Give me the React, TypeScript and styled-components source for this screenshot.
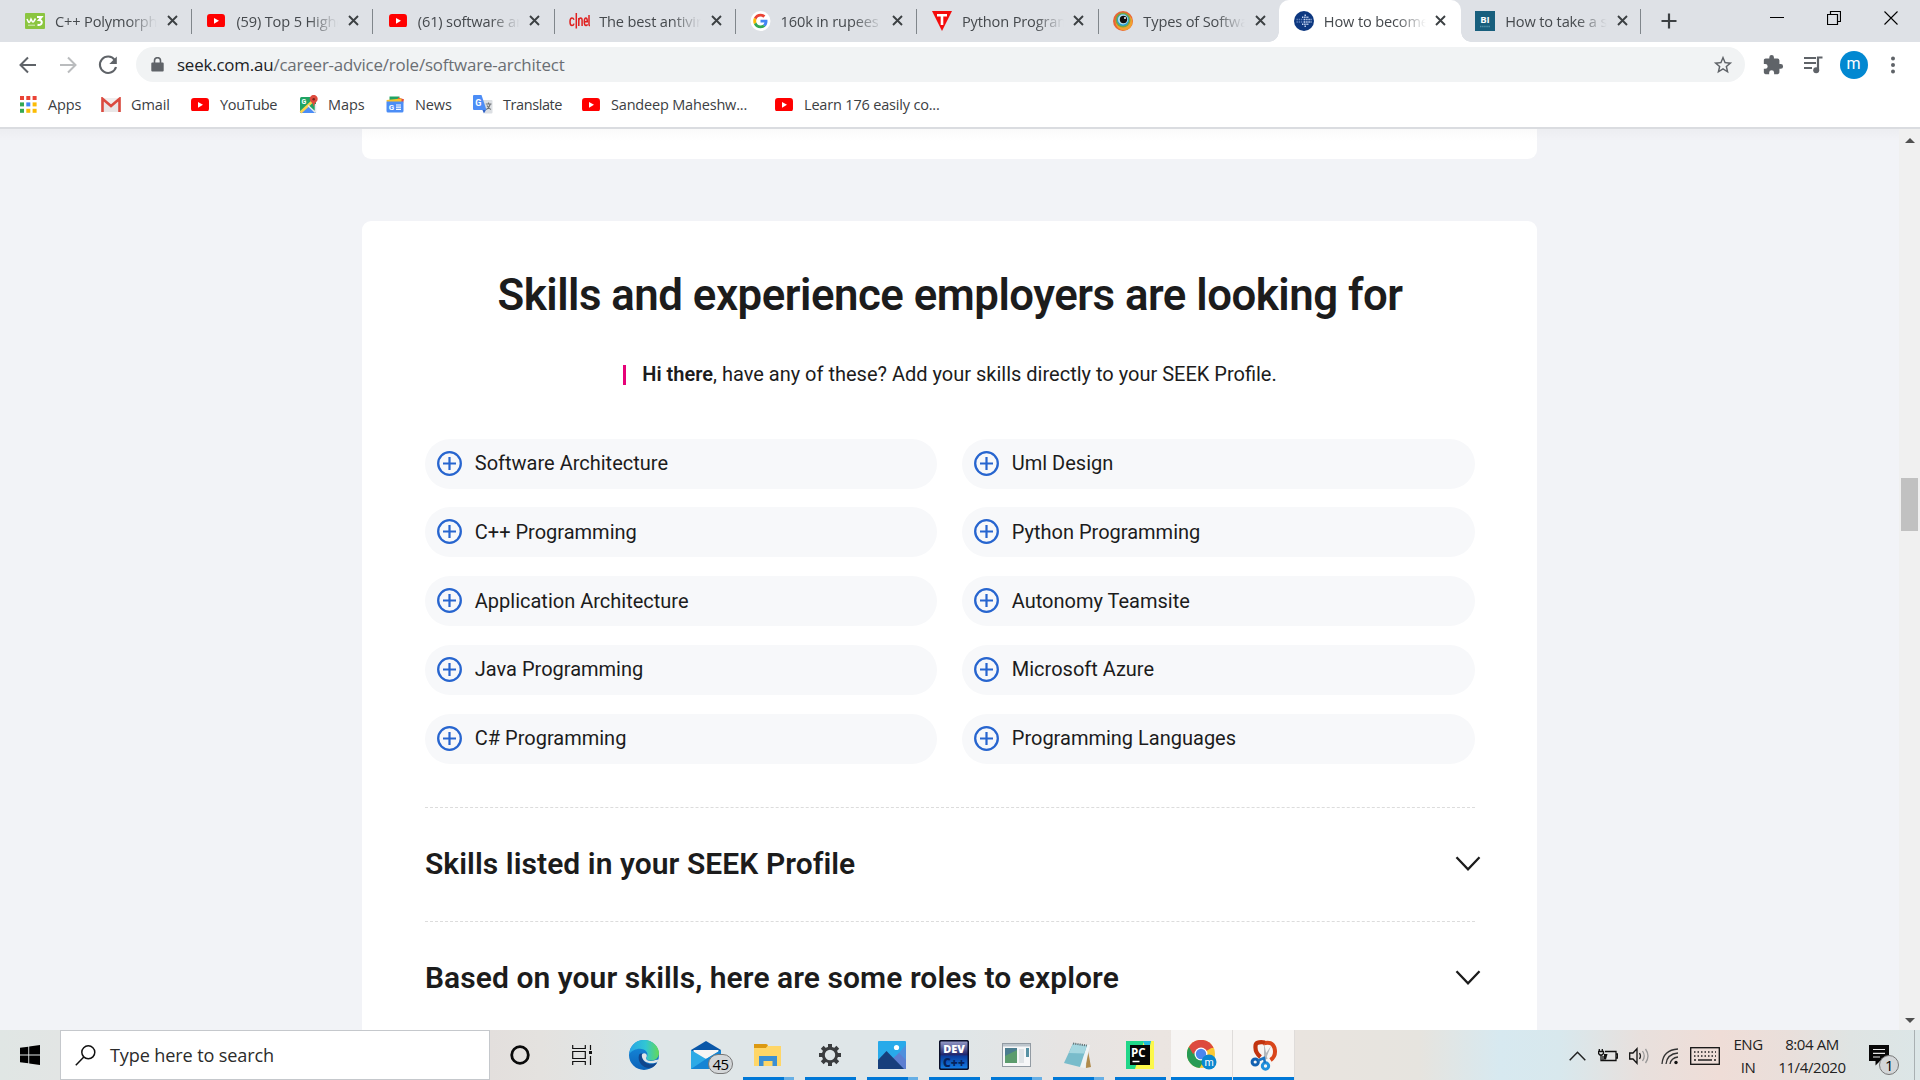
import React from 'react';
import styled, { createGlobalStyle, css } from 'styled-components';

const ui = '"Open Sans", "Noto Sans", sans-serif';

const Global = createGlobalStyle`
  * { box-sizing: border-box; }
  html, body { margin: 0; padding: 0; overflow: hidden; }
  svg { display: block; flex: none; }
`;

const Screen = styled.div`
  width: 1920px; height: 1080px; display: flex; flex-direction: column;
  overflow: hidden; background: #fff; font-family: ${ui};
`;

/* ---------- tab strip ---------- */
const TabStrip = styled.div`
  display: flex; height: 42px; background: #dee1e6; padding-left: 10.5px; flex: none;
`;
const Tab = styled.div<{ $active?: boolean; $line?: boolean; $w?: number }>`
  position: relative; display: flex; align-items: center; width: ${p => p.$w ?? 181.4}px; height: 42px; flex: none;
  padding: 0 13px 1px 14px;
  ${p => p.$line && css`
    &::after { content: ''; position: absolute; right: 0; top: 9px; width: 1px; height: 25px; background: #80868b; }
  `}
  ${p => p.$active && css`
    background: #fff; border-radius: 10px 10px 0 0;
    &::before, &::after { content: ''; position: absolute; bottom: 0; width: 10px; height: 10px; }
    &::before { left: -10px; background: radial-gradient(circle at 0 0, transparent 9.5px, #fff 10px); }
    &::after { right: -10px; background: radial-gradient(circle at 100% 0, transparent 9.5px, #fff 10px); }
  `}
`;
const Favicon = styled.div`
  width: 21px; height: 21px; display: flex; align-items: center; justify-content: center; flex: none;
`;
const TabTitle = styled.div`
  width: 103px; margin-left: 9.5px; overflow: hidden; white-space: pre; font-size: 14.6px; line-height: 22px;
  letter-spacing: -0.15px; color: #45494d;
  mask-image: linear-gradient(90deg, #000 72px, transparent 102px);
`;
const Close = styled.div`margin-left: 8.5px;`;
const NewTab = styled.div`display: flex; align-items: center; margin-left: 20px; padding-bottom: 0;`;
const WindowButtons = styled.div`
  display: flex; margin-left: auto; align-items: center; height: 36px; gap: 43px; padding-right: 22px;
`;

/* ---------- toolbar ---------- */
const Toolbar = styled.div`
  display: flex; align-items: center; height: 45px; padding: 0 14px 0 16px; flex: none; background: #fff;
`;
const NavIcons = styled.div`display: flex; gap: 16px; width: 119.5px;`;
const Omnibox = styled.div`
  display: flex; align-items: center; width: 1609px; height: 35px; border-radius: 18px; background: #f1f3f4; padding: 0 11px 0 15px;
`;
const Url = styled.div`
  flex: 1; margin-left: 13.5px; font-size: 16.9px; letter-spacing: -0.18px; line-height: 24px; color: #6a6e73; white-space: pre;
  b { font-weight: 400; color: #202124; }
`;
const Actions = styled.div`display: flex; align-items: center; margin-left: 17px; gap: 15.5px; svg:first-child { margin-right: 3px; }`;
const Avatar = styled.div`
  width: 28px; height: 28px; border-radius: 50%; background: #0288d1; color: #fff; font-family: Roboto, sans-serif;
  font-size: 16px; line-height: 26px; text-align: center;
`;
const Bookmarks = styled.div`
  display: flex; align-items: center; height: 40px; padding: 0 0 5px 19px; flex: none; background: #fff;
`;
const Bookmark = styled.div<{ $w: number; $gap: number; $ls?: number }>`
  display: flex; align-items: center; width: ${p => p.$w}px; gap: ${p => p.$gap}px; white-space: pre; flex: none;
  font-size: 14.5px; line-height: 20px; letter-spacing: ${p => p.$ls ?? -0.1}px; color: #3c4043;
`;

/* ---------- page ---------- */
const Viewport = styled.div`
  display: flex; height: 903px; flex: none; border-top: 2px solid #dadce0; background: #f2f3f7; overflow: hidden;
`;
const Page = styled.main`
  width: 1899px; padding-left: 362px; font-family: Roboto, sans-serif; color: #1c1c1c;
  background: linear-gradient(rgba(0,0,0,.025), transparent 12px);
`;
const PrevCard = styled.section`
  width: 1175px; height: 30px; background: linear-gradient(#fafafa, #fff 12px); border-radius: 0 0 9px 9px;
`;
const Card = styled.section`
  width: 1175px; height: 900px; margin-top: 62px; background: #fff; border-radius: 9px 9px 0 0; padding: 47px 62px 0 63px;
`;
const Title = styled.h1`
  margin: 0; font-size: 43.75px; line-height: 54px; font-weight: 600; text-align: center; white-space: pre; letter-spacing: -0.48px;
`;
const Greeting = styled.p`
  display: flex; align-items: center; justify-content: center; margin: 40px 0 0; font-size: 20px; line-height: 25px; height: 25px;
  white-space: pre;
  b { font-weight: 600; }
`;
const Accent = styled.span`width: 3px; height: 20px; background: #e60278; margin-right: 16px;`;
const SkillGrid = styled.div`
  display: grid; grid-template-columns: 512px 513px; column-gap: 25px; row-gap: 18.75px; margin-top: 51.6px;
`;
const Skill = styled.button`
  display: flex; align-items: center; height: 50px; border: 0; border-radius: 25px; background: #f7f8fa; padding: 0 0 1px 12.4px; gap: 12.4px;
  font: 400 20px/28px Roboto, sans-serif; color: #1c1c1c;
`;
const Accordion = styled.div`
  display: flex; align-items: center; justify-content: space-between; height: 113px; width: 1055.5px; padding-bottom: 1px;
`;
const Rule = styled.div`width: 1050px; border-top: 1px dashed #dcdcdc;`;
const Accordions = styled.div`margin-top: 43.4px;`;
const AccordionTitle = styled.h2`
  margin: 0; font-size: 30px; line-height: 38px; font-weight: 600; white-space: pre; letter-spacing: 0.06px;
`;
const Scrollbar = styled.div`
  width: 21px; background: #f0f0f0; display: flex; flex-direction: column; align-items: center; padding: 9px 0 7px;
`;
const Thumb = styled.div`width: 17px; height: 53px; margin-top: 335px; background: #c1c1c1;`;
const Arrow = styled.div<{ $down?: boolean }>`
  border: 5px solid transparent; border-width: ${p => (p.$down ? '5px 5px 0' : '0 5px 5px')};
  border-${p => (p.$down ? 'top' : 'bottom')}-color: #505050; margin-top: ${p => (p.$down ? 'auto' : '0')};
`;

/* ---------- taskbar ---------- */
const Taskbar = styled.footer`
  display: flex; height: 50px; flex: none;
  background: linear-gradient(90deg, #e0e6e4 0, #e2e5e4 60px, #e3dfdd 490px, #e4e2df 540px, #dfe6e8 640px, #dfe6e8 950px, #e6e4e3 1060px, #ebe5e1 1160px, #e9e4df 1300px, #e6e4df 1420px, #d7e9f0 1500px, #d8e8ed 1560px, #e8e0dd 1640px, #efddd7 1720px, #e9dfdb 1790px, #dfe4e3 1850px, #dce6e7 1920px);
`;
const Start = styled.div`width: 60px; display: flex; align-items: center; justify-content: center;`;
const Search = styled.div`
  display: flex; align-items: center; width: 430px; margin-right: -1px; height: 50px; background: #fff; border: 1px solid #c5c8cc; padding-left: 14px; gap: 14px;
  font-size: 18.1px; letter-spacing: -0.13px; color: #2b2b2b; white-space: pre; flex: none;
`;
const Slot = styled.div<{ $active?: boolean }>`
  position: relative; width: 62px; display: flex; align-items: center; justify-content: center; flex: none;
  background: ${p => (p.$active ? 'rgba(255,255,255,.62)' : 'none')};
  border-right: ${p => (p.$active ? '1px solid #dfdcda' : '0')};
`;
const Underline = styled.div<{ $kind: 'one' | 'many' | 'full' }>`
  position: absolute; bottom: 0; height: 3px; left: ${p => (p.$kind === 'full' ? 0 : 6)}px; right: ${p => (p.$kind === 'full' ? 0 : 5)}px;
  background: ${p => (p.$kind === 'many' ? 'linear-gradient(90deg, #0078d7 41px, #67afe5 41px)' : '#0078d7')};
`;
const Badge = styled.span<{ $x: number; $y: number; $w: number }>`
  position: absolute; left: ${p => p.$x}px; top: ${p => p.$y}px; width: ${p => p.$w}px; height: 20px; border-radius: 10px;
  background: #d3d6d8; border: 1px solid #777; font-size: 15px; line-height: 18px; text-align: center; color: #000; letter-spacing: -0.6px;
`;
const Tray = styled.div`display: flex; align-items: center; margin-left: auto; height: 50px; color: #222;`;
const TrayIcons = styled.div`display: flex; align-items: center; gap: 11.4px; padding-top: 2px;`;
const TrayText = styled.div<{ $w: number; $ls: number; $ml: number }>`
  width: ${p => p.$w}px; margin-left: ${p => p.$ml}px; text-align: center; font-size: 15px; line-height: 22.5px; letter-spacing: ${p => p.$ls}px; white-space: pre;
  padding-top: 1px;
`;
const Notice = styled.div`position: relative; width: 32px; height: 50px; margin-left: 17px; padding-top: 15px;`;
const ShowDesktop = styled.div`width: 6px; height: 50px; border-left: 1px solid #a9b0b2; margin-left: 13px;`;

/* ---------- icons ---------- */
const CloseX = () => (
  <svg width="11" height="11" viewBox="0 0 11 11"><path d="M1 1l9 9M10 1l-9 9" stroke="#3c4043" strokeWidth="1.900" /></svg>
);
const YouTube = ({ w = 18 }: { w?: number }) => (
  <svg width={w} height={w * 0.76} viewBox="0 0 18 13.7"><rect width="18" height="13.7" rx="3" fill="#f00" /><path d="M7 4l5 2.85L7 9.7z" fill="#fff" /></svg>
);
const W3 = () => (
  <svg width="20" height="16" viewBox="0 0 20 16"><rect width="20" height="16" rx="1" fill="#8bc540" />
    <path d="M2 6l1.500 3q.8 1 1.500-.5L6 6l1.300 2.600q.7 1 1.400 0L10.500 5.500" fill="none" stroke="#fff" strokeWidth="1.500" />
    <path d="M12 4h4.500l-2.500 3q3 0 2.800 2.600-.6 3-4.300 2.200" fill="none" stroke="#fff" strokeWidth="2" /><path d="M3 12.200h7" stroke="#d9edbe" /></svg>
);
const Cnet = () => (
  <svg width="21" height="16" viewBox="0 0 21 16"><g fill="none" stroke="#e0201f" strokeWidth="1.500">
    <path d="M5 6.800Q4.300 5 3 5 1 5 1 8.800t2 3.800q1.500 0 2-2M7.300 0v15.500M9.800 13V5M9.800 7.500Q10.200 5 11.600 5q1.500 0 1.500 2.500V13M15.300 8.700h3q0-3.700-1.500-3.700t-1.500 3.800q0 3.800 1.700 3.800 1 0 1.400-1.400M20 2v9q0 1.700 1 1.500" /></g></svg>
);
const GoogleG = () => (
  <svg width="21" height="20" viewBox="0 0 48 48"><circle cx="24" cy="24" r="24" fill="#fff" /><g transform="translate(6.500 6.500) scale(.73)">
    <path fill="#EA4335" d="M24 9.500c3.540 0 6.710 1.220 9.210 3.600l6.850-6.850C35.900 2.380 30.470 0 24 0 14.620 0 6.510 5.380 2.560 13.220l7.980 6.190C12.430 13.720 17.740 9.500 24 9.500z" />
    <path fill="#4285F4" d="M46.980 24.550c0-1.570-.15-3.090-.38-4.550H24v9.020h12.940c-.58 2.960-2.260 5.480-4.780 7.180l7.730 6c4.510-4.180 7.090-10.360 7.090-17.650z" />
    <path fill="#FBBC05" d="M10.530 28.590c-.48-1.450-.76-2.990-.76-4.590s.27-3.140.76-4.590l-7.980-6.190C.92 16.460 0 20.120 0 24c0 3.880.92 7.540 2.560 10.780z" />
    <path fill="#34A853" d="M24 48c6.480 0 11.930-2.130 15.890-5.810l-7.730-6c-2.150 1.450-4.920 2.300-8.160 2.300-6.260 0-11.570-4.220-13.470-9.910l-7.980 6.190C6.510 42.620 14.620 48 24 48z" /></g></svg>
);
const RedT = () => (
  <svg width="20" height="20" viewBox="0 0 20 20"><path d="M0 0h20L10 20z" fill="#f40b0b" /><path d="M5 3h10v2.400h-3.700V14H8.700V5.400H5z" fill="#fff" /></svg>
);
const Eye = () => (
  <svg width="20" height="20" viewBox="0 0 20 20"><circle cx="10" cy="10" r="10" fill="#ea6435" /><circle cx="11" cy="11" r="8.500" fill="#f1a02e" /><circle cx="10" cy="9" r="7.500" fill="#7fa43b" /><circle cx="10" cy="9" r="6" fill="#27a2d4" /><circle cx="10" cy="8.500" r="5" fill="#b7e3ee" /><circle cx="10.500" cy="8.500" r="3.700" fill="#111" /><circle cx="12" cy="7" r="1" fill="#fff" /></svg>
);
const SeekDot = () => (
  <svg width="20" height="20" viewBox="0 0 20 20"><circle cx="10" cy="10" r="10" fill="#0d3880" />
    <g strokeWidth="1.400" strokeDasharray="1.400 .8"><path d="M2.500 8.500h8M2.500 11h8" stroke="#5f80bb" /><path d="M10 8.500h7.500M10 11h7.500M8 6.300h7M8 13.200h7M10.500 4.300h2.200M10.500 15.300h2.200" stroke="#c9d9f5" /></g></svg>
);
const BusinessInsider = () => (
  <svg width="20" height="20" viewBox="0 0 20 20"><rect width="20" height="20" fill="#185f7d" />
    <text x="10" y="12" fontSize="9.500" fontWeight="700" fill="#fff" textAnchor="middle" fontFamily="Open Sans, sans-serif">BI</text>
    <path d="M5 15.500h10" stroke="#4f90a8" strokeWidth="1.500" strokeDasharray="1.500 .6" /></svg>
);
const ArrowNav = ({ flip }: { flip?: boolean }) => (
  <svg width="24" height="24" viewBox="0 0 24 24"><path transform={flip ? 'rotate(180 12 12)' : undefined} d="M20 12H4.500M12 4.500L4.500 12l7.500 7.500" fill="none" stroke={flip ? '#babcbe' : '#5f6368'} strokeWidth="2" /></svg>
);
const Reload = () => (
  <svg width="24" height="24" viewBox="0 0 24 24"><path d="M18.700 6.800A8.200 8.200 0 1 0 20 14" fill="none" stroke="#5f6368" strokeWidth="2.100" /><path d="M20.800 3.500V11H13.300z" fill="#5f6368" /></svg>
);
const Lock = () => (
  <svg width="13" height="15" viewBox="0 0 13 15"><path d="M1.300 5.500h10.400a1 1 0 0 1 1 1v7a1 1 0 0 1-1 1H1.300a1 1 0 0 1-1-1v-7a1 1 0 0 1 1-1z" fill="#5f6368" /><path d="M3.500 6V3.700a3 3 0 0 1 6 0V6" fill="none" stroke="#5f6368" strokeWidth="1.600" /></svg>
);
const Star = () => (
  <svg width="22" height="22" viewBox="0 0 24 24"><path fill="#5f6368" d="M22 9.240l-7.190-.62L12 2 9.190 8.630 2 9.240l5.460 4.730L5.820 21 12 17.270 18.180 21l-1.630-7.030L22 9.240zM12 15.400l-3.760 2.270 1-4.280-3.320-2.880 4.380-.38L12 6.100l1.710 4.040 4.380.38-3.320 2.880 1 4.280L12 15.400z" /></svg>
);
const Puzzle = () => (
  <svg width="22" height="22" viewBox="0 0 24 24"><path fill="#5f6368" d="M20.500 11H19V7c0-1.100-.9-2-2-2h-4V3.500a2.500 2.500 0 0 0-5 0V5H4c-1.100 0-2 .9-2 2v3.800h1.500a2.700 2.700 0 0 1 0 5.400H2V20c0 1.100.9 2 2 2h3.800v-1.500a2.700 2.700 0 0 1 5.400 0V22H17c1.100 0 2-.9 2-2v-4h1.500a2.500 2.500 0 0 0 0-5z" /></svg>
);
const Playlist = () => (
  <svg width="22" height="20" viewBox="0 0 22 20"><path d="M2 3h12M2 8h12M2 13h8" stroke="#5f6368" strokeWidth="2.200" /><path d="M16 15V2.500h4.500" fill="none" stroke="#5f6368" strokeWidth="2.200" /><circle cx="14.200" cy="15.200" r="3" fill="#5f6368" /></svg>
);
const Dots = () => (
  <svg width="20" height="20" viewBox="0 0 20 20"><g fill="#5f6368"><circle cx="10" cy="3.500" r="2" /><circle cx="10" cy="10" r="2" /><circle cx="10" cy="16.500" r="2" /></g></svg>
);
const AppsGrid = () => (
  <svg width="18" height="17" viewBox="0 0 18 17">
    {['#ea4335', '#ea4335', '#ea4335', '#34a853', '#4285f4', '#fbbc05', '#34a853', '#fbbc05', '#fbbc05'].map((c, i) => (
      <rect key={i} x={1 + (i % 3) * 6.3} y={Math.floor(i / 3) * 6.4} width="4" height="4" fill={c} />
    ))}
  </svg>
);
const Gmail = () => (
  <svg width="20" height="15" viewBox="0 0 20 15"><path d="M0 1h20v14H0z" fill="#f0eeee" /><path d="M3 15V4l7 6 7-6v11" fill="#e9e6e6" /><path d="M1.500 15V1.800L10 9l8.500-7.200V15" fill="none" stroke="#db4a3f" strokeWidth="2.600" /></svg>
);
const Maps = () => (
  <svg width="20" height="19" viewBox="0 0 20 19"><rect x="1" y="2" width="16" height="16" rx="1.500" fill="#1fa463" /><path d="M17 18L8.500 10 1 17.500q.5.500 1.500.5z" fill="#4c8df6" /><path d="M1.500 17.500L16 4" stroke="#fcd34a" strokeWidth="2.600" /><path d="M9 10.500l7.500 7M16.500 17.500V9" stroke="#e8eaed" strokeWidth="1.600" />
    <text x="2.500" y="9" fontSize="7" fontWeight="700" fill="#fff" fontFamily="Roboto, sans-serif">G</text>
    <path d="M14.700 12q0-3-2.500-5a4 4 0 1 1 5 0q-2.500 2-2.500 5z" fill="#de4b3e" /><circle cx="14.700" cy="4.200" r="1.300" fill="#7b231e" /></svg>
);
const News = () => (
  <svg width="19" height="17" viewBox="0 0 19 17"><path d="M3.500.5h10v6h-10z" fill="#1fa463" /><path d="M12 1.500l6 1.800-1 4h-6z" fill="#e04b3f" /><path d="M.5 4l15-1.500v4H1z" fill="#fbc02d" /><path d="M.5 5.500h17V15a1.500 1.500 0 0 1-1.500 1.500H2A1.500 1.500 0 0 1 .5 15z" fill="#4c8df6" />
    <text x="2.700" y="14" fontSize="8" fontWeight="700" fill="#fff" fontFamily="Roboto, sans-serif">G</text><path d="M10 9h5M10 11.200h5M10 13.400h5" stroke="#fff" strokeWidth="1.200" /></svg>
);
const Translate = () => (
  <svg width="20" height="19" viewBox="0 0 20 19"><path d="M8 5h10.500a1 1 0 0 1 1 1v11.500a1 1 0 0 1-1 1H12z" fill="#dcdfe3" /><path d="M9 14h4.500L11 18.500z" fill="#2d5fc4" /><path d="M1 0h7.500l5 15H1a1 1 0 0 1-1-1V1a1 1 0 0 1 1-1z" fill="#4c8df6" />
    <text x="2.300" y="11" fontSize="9" fontWeight="700" fill="#fff" fontFamily="Roboto, sans-serif">G</text>
    <path d="M12.800 9h5.700M15.500 7.500V9M17.300 9q-1 4-4 5.500M14 10.500q1.500 3 4 4" fill="none" stroke="#6f7377" strokeWidth="1.100" /></svg>
);
const Plus = () => (
  <svg width="25" height="25" viewBox="0 0 25 25"><circle cx="12.500" cy="12.500" r="11.300" fill="none" stroke="#2765cf" strokeWidth="2.300" /><path d="M12.500 6v13M6 12.500h13" stroke="#2765cf" strokeWidth="2.200" /></svg>
);
const Chevron = () => (
  <svg width="26" height="15" viewBox="0 0 26 15"><path d="M1.500 1.300L13 13.300l11.500-12" fill="none" stroke="#1c1c1c" strokeWidth="2.300" /></svg>
);
const Edge = () => (
  <svg width="30" height="30" viewBox="0 0 30 30"><defs>
    <linearGradient id="e1" x1="0" x2="1"><stop offset="0" stopColor="#27a5e5" /><stop offset=".55" stopColor="#31c6d4" /><stop offset="1" stopColor="#64d957" /></linearGradient>
    <linearGradient id="e2" x1="0" y1="0" x2="0" y2="1"><stop offset="0" stopColor="#168fe0" /><stop offset="1" stopColor="#0c62b8" /></linearGradient></defs>
    <circle cx="15" cy="15" r="15" fill="url(#e2)" />
    <path d="M1 10C3 4 8 0 15 0c9 0 15 7 15 13 0 5-4 7.500-7.500 7.500-4 0-5.500-1.500-5.300-2.500 2-2 2-6.500-2.500-8.500C9.500 7.500 3 10 .500 14z" fill="url(#e1)" />
    <path d="M10 15c-2 7 4 13 10 13 4 0 7-3 8-5.500-4 2.500-9 2.500-12-.5-2.500-2.500-2.500-5-1.500-7.500.5-1-3.500-2-4.500.5z" fill="#10468d" />
    <path d="M12.800 15.500c0-3 4.600-3 5 0 .2 1.500-1 2-.7 3.200.9 2.300 5.400 3 9.400 1.300L29.500 19.500 28.500 22c-4 2-9.500 1.500-12.500-.5-1.900-1.300-3.200-3.800-3.200-6z" fill="#dfe6e8" /></svg>
);
const Mail = () => (
  <svg width="30" height="28" viewBox="0 0 30 28"><path d="M0 9L15 0l15 9v4H0z" fill="#0a57a8" /><path d="M2.500 9h25v8h-25z" fill="#f7f5f4" /><path d="M0 9l15 9 15-9v19H0z" fill="#2daae6" /><path d="M0 28L15 18l15-9v19z" fill="#1584d4" /></svg>
);
const Folder = () => (
  <svg width="28" height="24" viewBox="0 0 28 24"><path d="M0 1h12l2 2h13v20H0z" fill="#f8c84b" /><path d="M0 1h12l2 1-2 3H0z" fill="#dc9912" /><path d="M0 5h12l2-2h13v20H0z" fill="#ffd667" /><path d="M5 23V13h18v10h-4.500v-5h-9v5z" fill="#3b8fd4" /></svg>
);
const Gear = () => (
  <svg width="24" height="24" viewBox="-12 -12 24 24"><g fill="#3b3d3f">{[0, 45, 90, 135, 180, 225, 270, 315].map(a => <rect key={a} x="-2" y="-11" width="4" height="5" transform={`rotate(${a})`} />)}</g>
    <circle r="6.700" fill="none" stroke="#3b3d3f" strokeWidth="3" /></svg>
);
const Photos = () => (
  <svg width="28" height="28" viewBox="0 0 28 28"><rect width="28" height="28" rx="1" fill="#28aaea" /><path d="M20 13l8-9v18z" fill="#4f90dd" /><path d="M12 20l9-8 7 7v9H12z" fill="#5d7fd1" /><path d="M0 19L8.500 10 26 28H0z" fill="#173f7c" /><circle cx="18.500" cy="6.500" r="2.600" fill="#fff" /></svg>
);
const DevCpp = () => (
  <svg width="30" height="30" viewBox="0 0 30 30"><defs><linearGradient id="dv" x1="0" y1="0" x2="0" y2="1"><stop offset="0" stopColor="#9aa0cc" /><stop offset=".48" stopColor="#22286e" /><stop offset=".55" stopColor="#0a3fa0" /><stop offset="1" stopColor="#1480e8" /></linearGradient></defs>
    <rect x=".7" y=".7" width="28.600" height="28.600" rx="1.500" fill="url(#dv)" stroke="#0a0f28" strokeWidth="1.500" />
    <text x="15" y="13" fontSize="11" fontWeight="800" fill="#fff" textAnchor="middle" fontFamily="Open Sans, sans-serif">DEV</text>
    <text x="15" y="26.500" fontSize="12" fontWeight="800" fill="#06225c" textAnchor="middle" fontFamily="Open Sans, sans-serif">C++</text></svg>
);
const WindowApp = () => (
  <svg width="29" height="24" viewBox="0 0 29 24"><rect x=".5" y=".5" width="28" height="23" fill="#f6f7f8" stroke="#929ba3" /><path d="M1 1h27v2.500H1z" fill="#bcc5cc" /><path d="M3 5h12v15H3z" fill="#4b7d8f" /><path d="M3 13L15 7v13H3z" fill="#5c9c6d" /><path d="M17 6h5v14h-5z" fill="#dfe3e6" /><path d="M24 5h3v9h-3z" fill="#5791a3" /></svg>
);
const Notepad = () => (
  <svg width="30" height="27" viewBox="0 0 30 27"><path d="M24 3l4 22-5 1z" fill="#b08b4c" /><path d="M12 2l15 1-5 23-6-1z" fill="#eef3f4" /><path d="M10 1.500l14 2L17 25 1 21z" fill="#79bccb" /><path d="M10 1.500l14 2-3 8L6 11z" fill="#a5d7e0" /><path d="M10 1.500l14 2" stroke="#69767a" strokeWidth="2" strokeDasharray="1.200 1" /></svg>
);
const PyCharm = () => (
  <svg width="28" height="28" viewBox="0 0 28 28"><path d="M0 0h28v28H0z" fill="#21d789" /><path d="M18 0h10v28H9z" fill="#fcf84a" /><path d="M17 0h8l-3 14z" fill="#20b9dd" /><rect x="4" y="4" width="20" height="20" fill="#060606" />
    <text x="5" y="15.500" fontSize="11.500" fontWeight="700" fill="#fff" fontFamily="Open Sans, sans-serif">PC</text><path d="M6.500 20.500h7" stroke="#fff" strokeWidth="1.500" /></svg>
);
const ChromeIcon = () => (
  <svg width="30" height="30" viewBox="0 0 30 30"><circle cx="14" cy="14" r="14" fill="#fcc934" /><path d="M14 14L1.800 7A14 14 0 0 1 26.200 7z" fill="#dd4a3e" /><path d="M14 14L1.800 7a14 14 0 0 0 10.700 21l5.500-9z" fill="#279b55" /><path d="M2 7l4 7 8-6h12.500l-.5-1H14z" fill="#dd4a3e" /><circle cx="14" cy="14" r="6.500" fill="#fff" /><circle cx="14" cy="14" r="5.200" fill="#4c86ee" />
    <circle cx="22" cy="22" r="7.500" fill="#0a87cf" /><text x="22" y="25.500" fontSize="10.500" fill="#fff" textAnchor="middle" fontFamily="Roboto, sans-serif">m</text></svg>
);
const Snip = () => (
  <svg width="28" height="31" viewBox="0 0 28 31"><path d="M13 3.500Q22 .5 24.500 8q2 8-4 12" fill="none" stroke="#d9461b" strokeWidth="4" /><path d="M15 2.500Q5 1 5.500 6.500q-.5 6 5 10.500" fill="none" stroke="#c2340f" strokeWidth="4.200" /><path d="M14 3l3.500 16-3.500.5zM21 6l-6 15-3-2z" fill="#b3b8bc" /><circle cx="5.200" cy="22" r="3.100" fill="none" stroke="#1260b0" strokeWidth="3" /><circle cx="15.500" cy="26" r="3.200" fill="none" stroke="#2090dc" strokeWidth="3" /><path d="M8 20.500l6-2.500 1 5" fill="none" stroke="#1c73c0" strokeWidth="2.500" /></svg>
);
const TaskView = () => (
  <svg width="21" height="20" viewBox="0 0 21 20"><g fill="none" stroke="#111" strokeWidth="1.200"><path d="M.7 0v3.500h12.600V0M.7 20v-3.500h12.600V20M.7 6.500h12.600v7H.7zM18.500 0v5M18.500 11v9" /></g><rect x="17" y="6" width="3" height="3" fill="#111" /></svg>
);

const tabs: { icon: React.ReactNode; title: string; active?: boolean; line?: boolean; w?: number }[] = [
  { icon: <W3 />, title: 'C++ Polymorphism', line: true },
  { icon: <YouTube />, title: '(59) Top 5 Highest', line: true },
  { icon: <YouTube />, title: '(61) software arch', line: true },
  { icon: <Cnet />, title: 'The best antivirus', line: true },
  { icon: <GoogleG />, title: '160k in rupees', line: true },
  { icon: <RedT />, title: 'Python Programm', line: true },
  { icon: <Eye />, title: 'Types of Software', w: 180.5 },
  { icon: <SeekDot />, title: 'How to become', active: true },
  { icon: <BusinessInsider />, title: 'How to take a scr', line: true, w: 180.5 },
];

const bookmarks: { icon: React.ReactNode; label: string; w: number; gap: number; ls?: number }[] = [
  { icon: <AppsGrid />, label: 'Apps', w: 82, gap: 11 },
  { icon: <Gmail />, label: 'Gmail', w: 90, gap: 10 },
  { icon: <YouTube />, label: 'YouTube', w: 108, gap: 11, ls: -0.35 },
  { icon: <Maps />, label: 'Maps', w: 87, gap: 9 },
  { icon: <News />, label: 'News', w: 87, gap: 10 },
  { icon: <Translate />, label: 'Translate', w: 109, gap: 10, ls: -0.42 },
  { icon: <YouTube />, label: 'Sandeep Maheshw...', w: 193, gap: 11, ls: -0.18 },
  { icon: <YouTube />, label: 'Learn 176 easily co...', w: 180, gap: 11, ls: -0.18 },
];

const skills = [
  'Software Architecture', 'Uml Design', 'C++ Programming', 'Python Programming', 'Application Architecture',
  'Autonomy Teamsite', 'Java Programming', 'Microsoft Azure', 'C# Programming', 'Programming Languages',
];

const apps: { icon: React.ReactNode; kind?: 'one' | 'many' | 'full'; badge?: string }[] = [
  { icon: <svg width="20" height="20" viewBox="0 0 20 20"><circle cx="10" cy="10" r="8.300" fill="none" stroke="#0a0a0a" strokeWidth="2.800" /></svg> },
  { icon: <TaskView /> },
  { icon: <Edge /> },
  { icon: <Mail />, badge: '45' },
  { icon: <Folder />, kind: 'many' },
  { icon: <Gear />, kind: 'one' },
  { icon: <Photos />, kind: 'many' },
  { icon: <DevCpp />, kind: 'one' },
  { icon: <WindowApp />, kind: 'many' },
  { icon: <Notepad />, kind: 'many' },
  { icon: <PyCharm />, kind: 'one' },
  { icon: <ChromeIcon />, kind: 'full' },
  { icon: <Snip />, kind: 'full' },
];

export default function App() {
  return (
    <Screen>
      <Global />
      <TabStrip>
        {tabs.map(t => (
          <Tab key={t.title} $active={t.active} $line={t.line} $w={t.w}>
            <Favicon>{t.icon}</Favicon>
            <TabTitle>{t.title}</TabTitle>
            <Close><CloseX /></Close>
          </Tab>
        ))}
        <NewTab><svg width="16" height="16" viewBox="0 0 16 16"><path d="M8 .5v15M.5 8h15" stroke="#3c4043" strokeWidth="2.200" /></svg></NewTab>
        <WindowButtons>
          <svg width="14" height="14" viewBox="0 0 14 14"><path d="M0 6.500h14" stroke="#000" /></svg>
          <svg width="14" height="14" viewBox="0 0 14 14"><path d="M.5 3.500h10v10H.5zM3.500 3.500V.5h10v10h-3" fill="none" stroke="#000" strokeWidth="1.200" /></svg>
          <svg width="14" height="14" viewBox="0 0 14 14"><path d="M.5.5l13 13M13.500.5l-13 13" stroke="#000" strokeWidth="1.100" /></svg>
        </WindowButtons>
      </TabStrip>
      <Toolbar>
        <NavIcons><ArrowNav /><ArrowNav flip /><Reload /></NavIcons>
        <Omnibox>
          <Lock />
          <Url><b>seek.com.au</b>/career-advice/role/software-architect</Url>
          <Star />
        </Omnibox>
        <Actions><Puzzle /><Playlist /><Avatar>m</Avatar><Dots /></Actions>
      </Toolbar>
      <Bookmarks>
        {bookmarks.map(b => <Bookmark key={b.label} $w={b.w} $gap={b.gap} $ls={b.ls}>{b.icon}{b.label}</Bookmark>)}
      </Bookmarks>
      <Viewport>
        <Page>
          <PrevCard />
          <Card>
            <Title>Skills and experience employers are looking for</Title>
            <Greeting><Accent /><b>Hi there</b>, have any of these? Add your skills directly to your SEEK Profile.</Greeting>
            <SkillGrid>{skills.map(s => <Skill key={s}><Plus />{s}</Skill>)}</SkillGrid>
            <Accordions>
              <Rule />
              <Accordion><AccordionTitle>Skills listed in your SEEK Profile</AccordionTitle><Chevron /></Accordion>
              <Rule />
              <Accordion><AccordionTitle>Based on your skills, here are some roles to explore</AccordionTitle><Chevron /></Accordion>
            </Accordions>
          </Card>
        </Page>
        <Scrollbar><Arrow /><Thumb /><Arrow $down /></Scrollbar>
      </Viewport>
      <Taskbar>
        <Start><svg width="20" height="20" viewBox="0 0 20 20"><path d="M0 2.800l8.300-1.100v7.800H0zM9.200 1.500L20 0v9.500H9.200zM0 10.500h8.300v7.800L0 17.200zM9.200 10.500H20V20L9.200 18.500z" /></svg></Start>
        <Search>
          <svg width="21" height="21" viewBox="0 0 21 21"><circle cx="13.300" cy="7.300" r="6.500" fill="none" stroke="#111" strokeWidth="1.500" /><path d="M8.800 12L.8 20.200" stroke="#111" strokeWidth="1.500" /></svg>
          Type here to search
        </Search>
        {apps.map((a, i) => (
          <Slot key={i} $active={a.kind === 'full'}>
            {a.icon}
            {a.badge && <Badge $x={33} $y={24} $w={25}>{a.badge}</Badge>}
            {a.kind && <Underline $kind={a.kind} />}
          </Slot>
        ))}
        <Tray>
          <TrayIcons>
            <svg width="17" height="10" viewBox="0 0 17 10"><path d="M.7 9.200l7.800-8 7.800 8" fill="none" stroke="#222" strokeWidth="1.500" /></svg>
            <svg width="20" height="14" viewBox="0 0 20 14"><g fill="none" stroke="#111" strokeWidth="1.300"><path d="M7 2.500h11v9H5V7M18.500 5h1v4h-1M1.300 0v2.500M4.300 0v2.500M.5 2.500h5v2L4 6H2L.5 4.500zM3 6v5.500h2" /></g><path d="M6 5h3.500l-1.500 5.500H6z" fill="#111" /></svg>
            <svg width="20" height="18" viewBox="0 0 20 18"><g fill="none" strokeWidth="1.300"><path d="M.7 6h3.300l4-4.300v14.600l-4-4.300H.7z" stroke="#111" /><path d="M10.500 6q2 3 0 6" stroke="#222" /><path d="M13.500 4q3.500 5 0 10M16.500 2q5 7 0 14" stroke="#999" /></g></svg>
            <svg width="18" height="17" viewBox="0 0 18 17"><g fill="none" stroke="#333" strokeWidth="1.300"><path d="M1 16Q2 2 17 1M5 16Q6 6 17 5M9 16Q10 10 17 9" /></g><circle cx="15" cy="14.500" r="1.700" fill="#111" /></svg>
            <svg width="30" height="18" viewBox="0 0 30 18"><rect x=".7" y=".7" width="28.600" height="16.600" fill="none" stroke="#111" strokeWidth="1.300" /><path d="M4 5h22M4 9h22" stroke="#222" strokeWidth="1.400" strokeDasharray="1.500 2" /><path d="M4 13h2M8 13h14M24 13h2" stroke="#222" strokeWidth="1.300" /></svg>
          </TrayIcons>
          <TrayText $w={40} $ls={-0.45} $ml={8}>ENG<br />IN</TrayText>
          <TrayText $w={80} $ls={-0.4} $ml={4}>8:04 AM<br />11/4/2020</TrayText>
          <Notice>
            <svg width="20" height="21" viewBox="0 0 20 21"><path d="M0 0h20v16H11l-4.500 4.500V16H0z" fill="#080808" /><path d="M4 4.500h12M4 8.300h12M4 12h7" stroke="#e8e8e8" strokeWidth="1.200" /></svg>
            <Badge $x={10} $y={25} $w={20}>1</Badge>
          </Notice>
          <ShowDesktop />
        </Tray>
      </Taskbar>
    </Screen>
  );
}
